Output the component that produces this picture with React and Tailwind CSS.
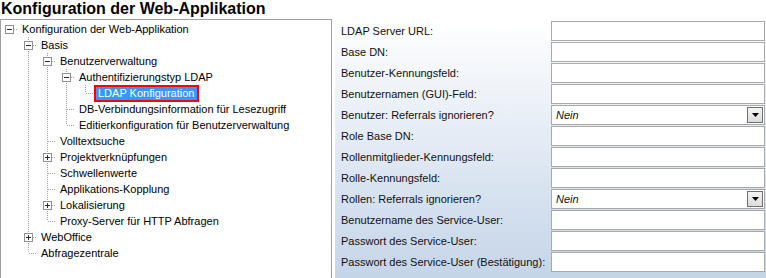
import React from "react";

// tree data for the left navigation
const tree = {
  label: "Konfiguration der Web-Applikation",
  open: true,
  children: [
    {
      label: "Basis",
      open: true,
      children: [
        {
          label: "Benutzerverwaltung",
          open: true,
          children: [
            {
              label: "Authentifizierungstyp LDAP",
              open: true,
              children: [{ label: "LDAP Konfiguration", selected: true }],
            },
            { label: "DB-Verbindungsinformation für Lesezugriff" },
            { label: "Editierkonfiguration für Benutzerverwaltung" },
          ],
        },
        { label: "Volltextsuche" },
        { label: "Projektverknüpfungen", closed: true },
        { label: "Schwellenwerte" },
        { label: "Applikations-Kopplung" },
        { label: "Lokalisierung", closed: true },
        { label: "Proxy-Server für HTTP Abfragen" },
      ],
    },
    { label: "WebOffice", closed: true },
    { label: "Abfragezentrale" },
  ],
};

const flatten = (node, level, trail, hasNext, rows) => {
  rows.push({ ...node, level, trail, hasNext });
  if (node.open && node.children) {
    node.children.forEach((child, i) => {
      flatten(child, level + 1, [...trail, hasNext], i < node.children.length - 1, rows);
    });
  }
  return rows;
};

const rows = flatten(tree, 0, [], false, []);

const DOT = "#a0a0a0";

const LineCell = ({ on }) => (
  <svg width="19" height="16" className="shrink-0" shapeRendering="crispEdges">
    {on && <line x1="8.5" y1="0" x2="8.5" y2="16" stroke={DOT} strokeDasharray="1 1" />}
  </svg>
);

const NodeCell = ({ row }) => {
  const expandable = row.open || row.closed;
  return (
    <svg width="17" height="16" className="shrink-0" shapeRendering="crispEdges">
      {row.level > 0 && <line x1="8.5" y1="0" x2="8.5" y2="8" stroke={DOT} strokeDasharray="1 1" />}
      {row.hasNext && <line x1="8.5" y1="8" x2="8.5" y2="16" stroke={DOT} strokeDasharray="1 1" />}
      <line x1={expandable ? 13 : 9} y1="8.5" x2="17" y2="8.5" stroke={DOT} strokeDasharray="1 1" />
      {expandable && (
        <g>
          <rect x="4.5" y="4.5" width="8" height="8" fill="white" stroke="#919191" />
          <line x1="6" y1="8.5" x2="11" y2="8.5" stroke="#2b2b2b" />
          {row.closed && <line x1="8.5" y1="6" x2="8.5" y2="11" stroke="#2b2b2b" />}
        </g>
      )}
    </svg>
  );
};

const TreeRow = ({ row }) => (
  <div className="flex h-4 items-center">
    {row.trail.map((on, i) => (
      <LineCell key={i} on={on} />
    ))}
    <NodeCell row={row} />
    {row.selected ? (
      <span className="h-[17px] pl-[2px] pr-[3px] border-2 border-[#ff0000] bg-[#3399ff] text-white leading-[13px] whitespace-nowrap">
        {row.label}
      </span>
    ) : (
      <span className="pl-[4px] text-black leading-4 whitespace-nowrap">{row.label}</span>
    )}
  </div>
);

const fields = [
  { label: "LDAP Server URL:" },
  { label: "Base DN:" },
  { label: "Benutzer-Kennungsfeld:" },
  { label: "Benutzernamen (GUI)-Feld:" },
  { label: "Benutzer: Referrals ignorieren?", select: "Nein" },
  { label: "Role Base DN:" },
  { label: "Rollenmitglieder-Kennungsfeld:" },
  { label: "Rolle-Kennungsfeld:" },
  { label: "Rollen: Referrals ignorieren?", select: "Nein" },
  { label: "Benutzername des Service-User:" },
  { label: "Passwort des Service-User:" },
  { label: "Passwort des Service-User (Bestätigung):" },
];

const FieldRow = ({ field }) => (
  <div className="flex h-5 mb-px">
    <div className="w-[216px] pl-[6px] pt-[3px] text-[11px] leading-[14px] text-[#111] whitespace-nowrap">
      {field.label}
    </div>
    <div className="w-[214px] h-5 border border-[#a9a9a9] bg-white flex items-center">
      {field.select && (
        <>
          <span className="flex-1 pl-[4px] italic text-[11px] text-[#111]">{field.select}</span>
          <div className="w-4 h-4 mr-px border border-[#707070] bg-linear-to-b from-[#f4f4f4] to-[#dcdcdc] flex items-center justify-center">
            <svg width="7" height="4" viewBox="0 0 7 4">
              <path d="M0 0h7L3.5 4z" fill="#000" />
            </svg>
          </div>
        </>
      )}
    </div>
  </div>
);

export default function App() {
  return (
    <div className="w-[766px] h-[278px] overflow-hidden bg-white font-['Liberation_Sans',Arial,sans-serif]">
      <div className="h-[19px] pl-px text-[16px] font-bold leading-[18px] text-black">
        Konfiguration der Web-Applikation
      </div>
      <div className="flex">
        <div className="w-[332px] h-[262px] shrink-0 border border-[#a0a0a0] pt-px text-[11px]">
          {rows.map((row, i) => (
            <TreeRow key={i} row={row} />
          ))}
        </div>
        <div className="w-[3px] shrink-0" />
        <div className="flex-1 h-[262px] pt-[2px] bg-linear-to-b from-white to-[#c4d4e8]">
          {fields.map((field, i) => (
            <FieldRow key={i} field={field} />
          ))}
        </div>
      </div>
    </div>
  );
}
